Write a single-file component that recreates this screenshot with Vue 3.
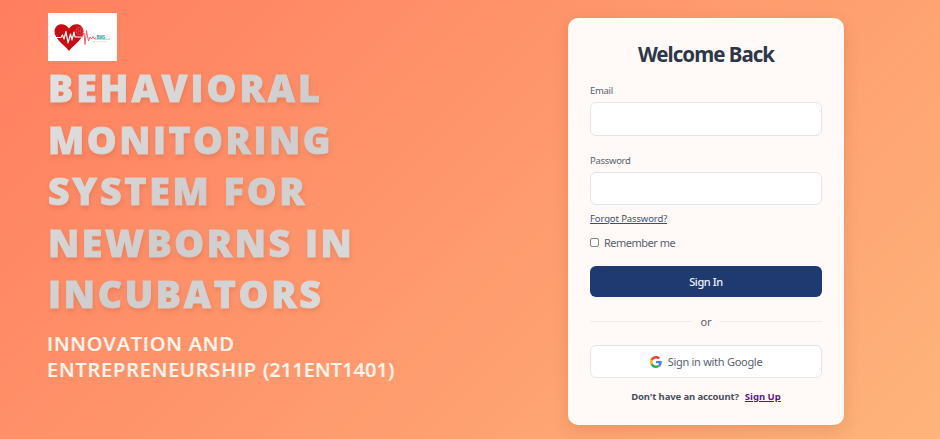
<script setup>
import { ref } from 'vue'

const titleLines = [
  { text: 'Behavioral', cls: 'l1' },
  { text: 'Monitoring', cls: 'l2' },
  { text: 'System for', cls: 'l3' },
  { text: 'Newborns in', cls: 'l4' },
  { text: 'Incubators', cls: 'l5' },
]
const email = ref('')
const password = ref('')
const remember = ref(false)
</script>

<template>
  <main class="page">
    <section class="intro">
      <svg class="logo" viewBox="0 0 69 48" aria-hidden="true">
        <rect width="69" height="48" fill="#fff" />
        <path d="M21 38C16 31.500 6.500 26 6.500 18.500C6.500 10.500 16.500 8.500 21 15.500C25.500 8.500 35.500 10.500 35.500 18.500C35.500 26 26 31.500 21 38Z" fill="#c90c12" />
        <circle cx="31.500" cy="18" r="3.600" fill="none" stroke="#e5686b" stroke-width=".7" />
        <path d="M30.300 16v4M32.700 16v4M30.300 18h2.400" stroke="#e5686b" stroke-width=".6" />
        <path d="M7 24.500H13L14.500 22L16 26L18 18.500L20 30L22.500 21L24 27L26 19L27 24H34" fill="none" stroke="#fff" stroke-width="1.200" stroke-linejoin="round" />
        <path d="M34 24.500L36 20L37 31.500L38.500 17.500L40.500 28L42 24L43.500 26L45 23.500L46.500 26L48 24.800" fill="none" stroke="#dc5960" stroke-width=".9" stroke-linejoin="round" />
        <path d="M47 26.200H62" stroke="#d9868a" stroke-width=".6" />
        <text class="logo-name" x="48.500" y="25.800" textLength="8.500" lengthAdjust="spacingAndGlyphs">BMS</text>
        <path d="M45 28.700H59" stroke="#d3d8b8" stroke-width=".7" stroke-dasharray="2 .7" />
      </svg>
      <h1 class="title">
        <span v-for="line in titleLines" :key="line.cls" :class="['line', line.cls]">{{ line.text }}</span>
      </h1>
      <p class="subtitle">
        <span class="line">Innovation and</span>
        <span class="line">Entrepreneurship <span class="code">(211ENT1401)</span></span>
      </p>
    </section>

    <form class="card" @submit.prevent>
      <h2 class="heading"><span>Welcome Back</span></h2>
      <label class="label" for="email">Email</label>
      <input id="email" v-model="email" class="field" type="email" />
      <label class="label second" for="password">Password</label>
      <input id="password" v-model="password" class="field" type="password" />
      <a class="forgot" href="#">Forgot Password?</a>
      <label class="remember">
        <input v-model="remember" class="check" type="checkbox" />
        <span>Remember me</span>
      </label>
      <button class="signin" type="submit">Sign In</button>
      <div class="divider"><span>or</span></div>
      <button class="google" type="button">
        <svg class="g" viewBox="0 0 48 48" aria-hidden="true">
          <path fill="#EA4335" d="M24 9.500c3.540 0 6.710 1.220 9.210 3.600l6.850-6.850C35.900 2.380 30.470 0 24 0 14.620 0 6.510 5.380 2.560 13.220l7.980 6.190C12.430 13.720 17.740 9.500 24 9.500z" />
          <path fill="#4285F4" d="M46.980 24.550c0-1.570-.15-3.090-.38-4.550H24v9.020h12.940c-.58 2.960-2.260 5.480-4.780 7.180l7.730 6c4.510-4.180 7.090-10.360 7.090-17.650z" />
          <path fill="#FBBC05" d="M10.530 28.590c-.48-1.450-.76-2.990-.76-4.590s.27-3.140.76-4.590l-7.980-6.190C.92 16.460 0 20.120 0 24c0 3.880.92 7.540 2.560 10.780l7.970-6.190z" />
          <path fill="#34A853" d="M24 48c6.480 0 11.930-2.130 15.890-5.810l-7.730-6c-2.150 1.450-4.920 2.300-8.160 2.300-6.260 0-11.570-4.220-13.470-9.910l-7.980 6.190C6.510 42.620 14.620 48 24 48z" />
        </svg>
        <span>Sign in with Google</span>
      </button>
      <p class="signup"><span>Don't have an account?</span><a href="#">Sign Up</a></p>
    </form>
  </main>
</template>

<style>
body {
  margin: 0;
}
</style>

<style scoped>
.page {
  box-sizing: border-box;
  width: 100%;
  height: 439px;
  display: flex;
  justify-content: space-between;
  align-items: flex-start;
  padding: 13px 96px 0 48px;
  overflow: hidden;
  background: linear-gradient(135deg, #ff7e5f, #feb47b);
  font-family: "Noto Sans", "Open Sans", sans-serif;
}
.intro {
  width: 400px;
}
.logo {
  display: block;
  width: 69px;
  height: 48px;
}
.logo-name {
  font: 700 5px "Noto Sans", sans-serif;
  fill: #2b9ba6;
}
.line {
  display: block;
  white-space: nowrap;
}
.title {
  width: 347px;
  margin: 1px 0 0;
  font: 800 37.500px/51.500px "Open Sans", sans-serif;
  text-transform: uppercase;
  color: transparent;
  -webkit-text-stroke: 0.900px transparent;
  background: linear-gradient(135deg, #e2e2e2, #cdcdcd 50%, #e0e0e0);
  -webkit-background-clip: text;
  background-clip: text;
  filter: drop-shadow(1px 3px 2px rgba(90, 40, 20, 0.13));
}
.l1 {
  letter-spacing: 2.950px;
}
.l2 {
  letter-spacing: 2.500px;
}
.l3 {
  letter-spacing: 2.700px;
}
.l4 {
  letter-spacing: 2.550px;
}
.l5 {
  letter-spacing: 2.700px;
}
.subtitle {
  margin: 11px 0 0 -1px;
  font: 600 20px/26.500px "Open Sans", sans-serif;
  letter-spacing: 0.800px;
  text-transform: uppercase;
  color: #fff5ec;
  -webkit-text-stroke: 0.200px #fff5ec;
}
.code {
  letter-spacing: 0.050px;
}
.card {
  box-sizing: border-box;
  width: 276px;
  height: 407px;
  margin-top: 5px;
  padding: 18px 22px 0;
  display: flex;
  flex-direction: column;
  border-radius: 10px;
  background: #fffaf7;
  box-shadow: 0 5px 16px rgba(120, 50, 10, 0.16);
  color: #5a6270;
}
.heading {
  margin: 0 0 11px;
  text-align: center;
  font-size: 20.500px;
  line-height: 36px;
  font-weight: 700;
  letter-spacing: -0.980px;
  color: #2d3748;
}
.label {
  height: 16px;
  margin-bottom: 3px;
  font-size: 9.500px;
  line-height: 16px;
  letter-spacing: -0.300px;
}
.second {
  margin-top: 17px;
}
.field {
  box-sizing: border-box;
  width: 100%;
  height: 33.500px;
  padding: 0 10px;
  border: 1px solid #e2e5ec;
  border-radius: 6px;
  background: #fff;
  font: 11px "Noto Sans", sans-serif;
  outline: none;
}
.forgot {
  align-self: flex-start;
  margin-top: 5.500px;
  font-size: 9.500px;
  line-height: 16px;
  letter-spacing: -0.120px;
  color: #3d5078;
}
.remember {
  display: flex;
  align-items: center;
  gap: 5px;
  height: 16px;
  margin-top: 8px;
  font-size: 11px;
  letter-spacing: -0.500px;
}
.check {
  appearance: none;
  box-sizing: border-box;
  width: 9px;
  height: 9px;
  margin: 0;
  border: 1px solid #858585;
  border-radius: 2px;
  background: #fff;
}
.signin,
.google {
  width: 100%;
  box-sizing: border-box;
  padding: 0;
  border-radius: 6px;
  font: 11px "Noto Sans", sans-serif;
  letter-spacing: -0.280px;
}
.signin {
  height: 31px;
  margin-top: 15.500px;
  border: 0;
  background: #1e3a70;
  color: #f0f3fa;
  font-weight: 500;
  letter-spacing: -0.400px;
}
.divider {
  display: flex;
  align-items: center;
  gap: 8px;
  height: 16px;
  margin-top: 16px;
  font-size: 11px;
}
.divider::before,
.divider::after {
  content: "";
  flex: 1;
  height: 1px;
  background: #eeebec;
}
.google {
  display: flex;
  justify-content: center;
  align-items: center;
  gap: 6px;
  height: 33px;
  margin-top: 16px;
  border: 1px solid #e2e5ec;
  background: #fff;
  color: #5a6270;
}
.g {
  width: 12px;
  height: 12px;
}
.signup {
  display: flex;
  justify-content: center;
  gap: 6px;
  margin: 11px 0 0;
  font-size: 9.500px;
  line-height: 16px;
  font-weight: 700;
  letter-spacing: -0.120px;
  color: #4a4f5f;
}
.signup a {
  letter-spacing: 0;
  color: #551a8b;
}
</style>
